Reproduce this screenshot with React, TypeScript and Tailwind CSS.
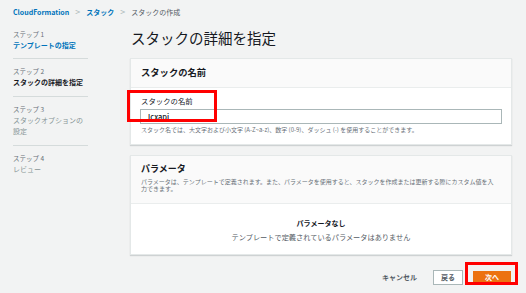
import { ReactNode } from "react";

const font = {
  fontFamily: '"Noto Sans CJK JP", "Noto Sans", sans-serif',
};

type Paso = {
  etiqueta: string;
  titulo: ReactNode;
  estado: "hecho" | "actual" | "pendiente";
};

const pasos: Paso[] = [
  { etiqueta: "ステップ 1", titulo: "テンプレートの指定", estado: "hecho" },
  { etiqueta: "ステップ 2", titulo: "スタックの詳細を指定", estado: "actual" },
  {
    etiqueta: "ステップ 3",
    titulo: (
      <>
        スタックオプションの
        <br />
        設定
      </>
    ),
    estado: "pendiente",
  },
  { etiqueta: "ステップ 4", titulo: "レビュー", estado: "pendiente" },
];

function Sidebar() {
  return (
    <div className="w-[75px] ml-[13px] shrink-0 pt-[5px]">
      {pasos.map((p, i) => (
        <div
          key={p.etiqueta}
          className={
            i === pasos.length - 1
              ? "pt-[7px]"
              : i === 0
              ? "pb-[7px] border-b border-[#d5dbdb]"
              : "pt-[7px] pb-[8px] border-b border-[#d5dbdb]"
          }
        >
          <div className="text-[6.5px] leading-[10px] text-[#687078]">
            {p.etiqueta}
          </div>
          <div
            className={
              p.estado === "hecho"
                ? "text-[7px] leading-[11px] mt-[1px] text-[#0073bb] font-semibold"
                : p.estado === "actual"
                ? "text-[7px] leading-[11px] mt-[1px] text-[#16191f] font-bold"
                : "text-[7px] leading-[11px] mt-[1px] text-[#879596]"
            }
          >
            {p.titulo}
          </div>
        </div>
      ))}
    </div>
  );
}

export default function App() {
  return (
    <div
      className="relative w-[526px] h-[293px] overflow-hidden bg-[#f2f3f3] text-[#16191f]"
      style={font}
    >
      {/* Migas de pan */}
      <div className="h-[24px] flex items-center pl-[13px] gap-[6px] text-[7px]">
        <span className="text-[#0073bb] font-semibold">CloudFormation</span>
        <span className="text-[#aab7b8] text-[9px]">&gt;</span>
        <span className="text-[#0073bb] font-semibold">スタック</span>
        <span className="text-[#aab7b8] text-[9px]">&gt;</span>
        <span className="text-[#545b64]">スタックの作成</span>
      </div>

      <div className="flex">
        <Sidebar />

        <div className="ml-[42px] w-[382px]">
          <h1 className="mt-[4px] text-[14.5px] leading-[20px] font-normal pl-[1px]">
            スタックの詳細を指定
          </h1>

          {/* Panel nombre */}
          <div className="mt-[10px] bg-white border border-[#e4e8e8] shadow-[0_1px_1px_rgba(0,28,36,0.15)]">
            <div className="h-[29px] flex items-center px-[10px] bg-[#fafafa] border-b border-[#eaeded]">
              <h2 className="text-[9.3px] font-bold">スタックの名前</h2>
            </div>
            <div className="px-[9px] pt-[8px] pb-[10px]">
              <div className="text-[7.4px] leading-[10px] pl-[1px]">
                スタックの名前
              </div>
              <div className="mt-[3px] h-[15px] border border-[#aab7b8] bg-white flex items-center pl-[7px] text-[7.5px] font-medium">
                lcxapi
              </div>
              <div className="mt-[2px] text-[6px] leading-[8px] text-[#687078] pl-[1px]">
                スタック名では、大文字および小文字 (A-Z~a-z)、数字 (0-9)、ダッシュ (-) を使用することができます。
              </div>
            </div>
          </div>

          {/* Panel parámetros */}
          <div className="mt-[10px] bg-white border border-[#e4e8e8] shadow-[0_1px_1px_rgba(0,28,36,0.15)]">
            <div className="px-[10px] pt-[7px] pb-[11px] bg-[#fafafa] border-b border-[#eaeded]">
              <h2 className="text-[9px] leading-[12px] font-bold">パラメータ</h2>
              <p className="mt-[3px] pr-[4px] text-[6px] leading-[7px] text-[#687078]">
                パラメータは、テンプレートで定義されます。また、パラメータを使用すると、スタックを作成または更新する際にカスタム値を入力できます。
              </p>
            </div>
            <div className="pt-[14px] pb-[12px] flex flex-col items-center">
              <div className="text-[7px] leading-[10px] font-bold">パラメータなし</div>
              <div className="mt-[4px] text-[7.2px] leading-[10px] text-[#545b64]">
                テンプレートで定義されているパラメータはありません
              </div>
            </div>
          </div>

          {/* Botones */}
          <div className="mt-[15px] flex items-center justify-end pr-[1px]">
            <button className="text-[7px] font-bold text-[#545b64] mr-[16px]">
              キャンセル
            </button>
            <button className="h-[15px] w-[30px] border border-[#aab7b8] bg-white text-[7px] font-bold text-[#545b64] mr-[10px]">
              戻る
            </button>
            <button className="h-[14px] w-[38px] bg-[#ec7211] text-white text-[7px] font-bold">
              次へ
            </button>
          </div>
        </div>
      </div>

      {/* Recuadros rojos de anotación */}
      <div className="absolute left-[127px] top-[90px] w-[90px] h-[32px] border-[3px] border-[#ff0000]" />
      <div className="absolute left-[465px] top-[262px] w-[53px] h-[23px] border-[3px] border-[#ff0000]" />
    </div>
  );
}
